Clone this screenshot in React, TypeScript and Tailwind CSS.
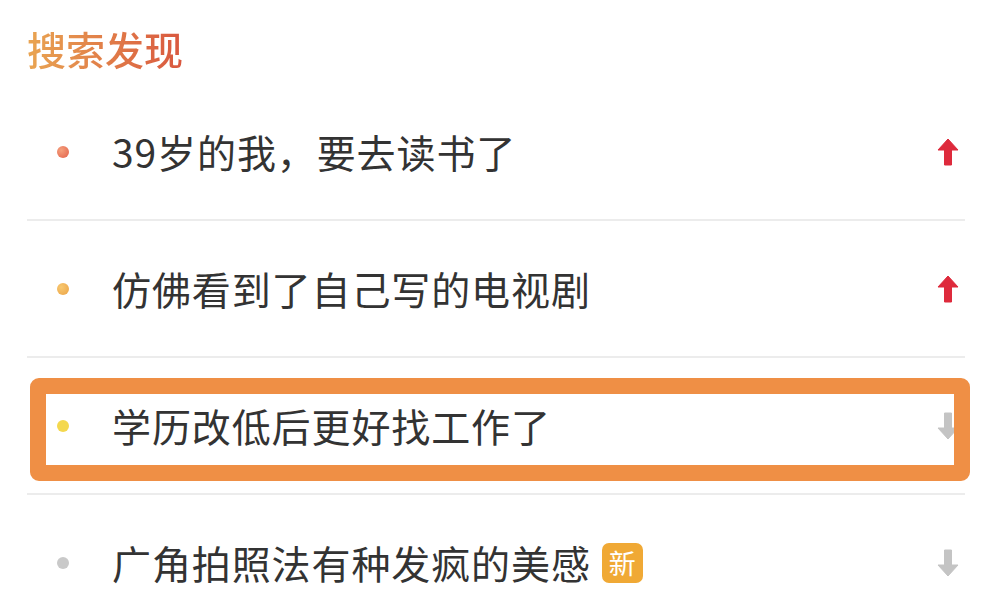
import React from "react";

type Trend = "up" | "down";

const rows: { text: string; dot: string; trend: Trend; badge?: boolean }[] = [
  { text: "39岁的我，要去读书了", dot: "bg-[radial-gradient(circle_at_35%_35%,#f5a07c,#e2604a)]", trend: "up" },
  { text: "仿佛看到了自己写的电视剧", dot: "bg-[radial-gradient(circle_at_35%_35%,#f8c870,#eba346)]", trend: "up" },
  { text: "学历改低后更好找工作了", dot: "bg-[#f4d84e]", trend: "down" },
  { text: "广角拍照法有种发疯的美感", dot: "bg-[#c9c9c9]", trend: "down", badge: true },
];

function Arrow({ trend }: { trend: Trend }) {
  const color = trend === "up" ? "#de2a3c" : "#c4c4c4";
  return (
    <svg width="22" height="28" viewBox="0 0 22 28" className={trend === "down" ? "rotate-180" : ""}>
      <path d="M11 1 L21 12 L14.5 12 L14.5 27 L7.5 27 L7.5 12 L1 12 Z" fill={color} strokeLinejoin="round" stroke={color} strokeWidth="1" />
    </svg>
  );
}

export default function App() {
  const font = { fontFamily: '"Noto Sans CJK SC", "Noto Sans", sans-serif' };
  return (
    <main className="relative h-[597px] w-[1000px] overflow-hidden bg-white" style={font}>
      <div className="px-[27px] pr-[35px]">
        <h1 className="h-[84px] pt-[25px] text-[39px] font-medium leading-[46px]">
          <span className="bg-[linear-gradient(90deg,#e9a552,#d9573f)] bg-clip-text text-transparent">搜索发现</span>
        </h1>
        {rows.map((r, i) => (
          <div key={i} className="relative flex h-[137px] items-center border-b-2 border-[#ececec]">
            <span className={`ml-[30px] h-[12px] w-[12px] rounded-full ${r.dot}`} />
            <span className="ml-[43px] text-[39px] leading-none tracking-[0.9px] text-[#333333]">{r.text}</span>
            {r.badge && (
              <span className="ml-[11px] flex h-[40px] w-[41px] items-center justify-center rounded-[7px] bg-[#f0a935] text-[27px] leading-none text-white">
                新
              </span>
            )}
            <span className="ml-auto mr-[6px] flex items-center">
              <Arrow trend={r.trend} />
            </span>
            {i === 2 && (
              <div className="absolute left-[3px] right-[-5px] top-[20px] h-[103px] rounded-[9px] border-[16px] border-[#ef8f45] bg-transparent" />
            )}
          </div>
        ))}
      </div>
    </main>
  );
}
